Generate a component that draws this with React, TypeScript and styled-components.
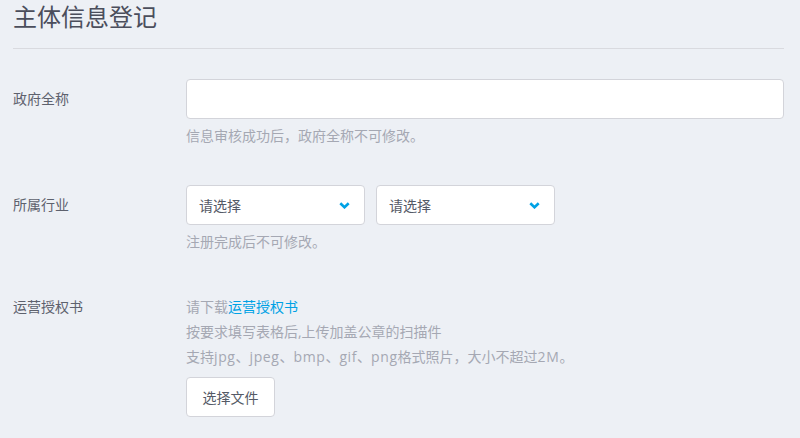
import React from "react"
import styled, { createGlobalStyle } from "styled-components"

const GlobalStyle = createGlobalStyle`
  html, body {
    margin: 0;
    padding: 0;
    background: #edf0f5;
  }
  body {
    font-family: "Open Sans", "Noto Sans CJK SC", "Liberation Sans", sans-serif;
    font-size: 14px;
    color: #555a66;
  }
  * {
    box-sizing: border-box;
  }
`

const Page = styled.div`
  width: 800px;
  height: 438px;
  overflow: hidden;
  padding: 0 16px 0 13px;
  background: #edf0f5;
`

const Header = styled.div`
  height: 49px;
  border-bottom: 1px solid #d9dadf;
  h1 {
    margin: 0;
    font-size: 24px;
    font-weight: 400;
    line-height: 34px;
    color: #4b4e5c;
  }
`

const Form = styled.div`
  padding-top: 30px;
  display: flex;
  flex-direction: column;
  gap: 39px;
`

const Row = styled.div`
  display: grid;
  grid-template-columns: 173px 1fr;
  align-items: start;
`

const Label = styled.div<{ $lh?: number; $pt?: number }>`
  font-size: 14px;
  color: #5d616d;
  line-height: ${(p) => p.$lh ?? 40}px;
  padding-top: ${(p) => p.$pt ?? 0}px;
`

const Field = styled.div<{ $pt?: number }>`
  display: flex;
  flex-direction: column;
  padding-top: ${(p) => p.$pt ?? 0}px;
`

const Input = styled.input`
  width: 598px;
  height: 40px;
  border: 1px solid #d3d4da;
  border-radius: 4px;
  background: #fff;
  padding: 0 12px;
  font: inherit;
  outline: none;
`

const Hint = styled.div<{ $mt?: number; $lh?: number }>`
  margin-top: ${(p) => p.$mt ?? 7}px;
  font-size: 14px;
  line-height: ${(p) => p.$lh ?? 20}px;
  color: #a5a8b3;
  white-space: nowrap;
`

const Latin = styled.span`
  letter-spacing: 0.6px;
`

const Link = styled.a`
  color: #00a2e5;
  text-decoration: none;
`

const Selects = styled.div`
  display: flex;
  gap: 11px;
`

const Select = styled.div`
  width: 179px;
  height: 40px;
  border: 1px solid #d3d4da;
  border-radius: 4px;
  background: #fff;
  padding: 0 14px 0 12px;
  display: flex;
  align-items: center;
  justify-content: space-between;
  color: #555a66;
  font-size: 14px;
  cursor: pointer;
`

const FileButton = styled.button`
  margin-top: 8px;
  width: 89px;
  height: 40px;
  border: 1px solid #d3d4da;
  border-radius: 4px;
  background: #fff;
  font: inherit;
  font-size: 14px;
  color: #555a66;
  cursor: pointer;
`

const Chevron = () => (
  <svg width="11" height="7" viewBox="0 0 11 7">
    <polyline
      points="1.3,1.3 5.5,5.3 9.7,1.3"
      fill="none"
      stroke="#00a2e5"
      strokeWidth="2.6"
      strokeLinejoin="miter"
    />
  </svg>
)

const App = () => {
  return (
    <Page>
      <GlobalStyle />
      <Header>
        <h1>主体信息登记</h1>
      </Header>
      <Form>
        <Row>
          <Label>政府全称</Label>
          <Field>
            <Input />
            <Hint>信息审核成功后，政府全称不可修改。</Hint>
          </Field>
        </Row>
        <Row>
          <Label>所属行业</Label>
          <Field>
            <Selects>
              <Select>
                <span>请选择</span>
                <Chevron />
              </Select>
              <Select>
                <span>请选择</span>
                <Chevron />
              </Select>
            </Selects>
            <Hint>注册完成后不可修改。</Hint>
          </Field>
        </Row>
        <Row>
          <Label $lh={25} $pt={3}>
            运营授权书
          </Label>
          <Field $pt={3}>
            <Hint $mt={0} $lh={25}>
              请下载<Link href="#">运营授权书</Link>
            </Hint>
            <Hint $mt={0} $lh={25}>
              按要求填写表格后,上传加盖公章的扫描件
            </Hint>
            <Hint $mt={0} $lh={25}>
              支持<Latin>jpg</Latin>、<Latin>jpeg</Latin>、<Latin>bmp</Latin>、<Latin>gif</Latin>、<Latin>png</Latin>格式照片，大小不超过<Latin>2M</Latin>。
            </Hint>
            <div>
              <FileButton>选择文件</FileButton>
            </div>
          </Field>
        </Row>
      </Form>
    </Page>
  )
}

export default App
